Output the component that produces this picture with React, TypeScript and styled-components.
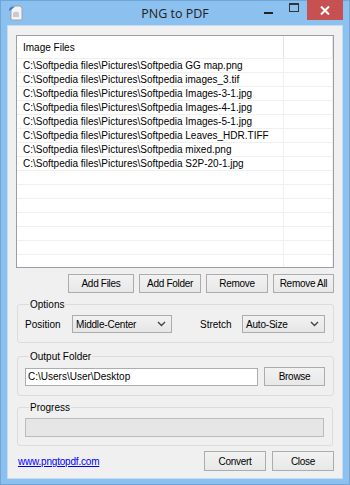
import React from 'react';
import styled, { createGlobalStyle } from 'styled-components';

const GlobalStyle = createGlobalStyle`
    html, body {
        margin: 0;
        padding: 0;
        overflow: hidden;
    }
    body {
        font-family: "Liberation Sans", Arial, sans-serif;
        font-size: 10px;
        color: #000;
    }
`;

const Window = styled.div`
    width: 350px;
    height: 485px;
    box-sizing: border-box;
    background: #8bc0ef;
    border: 1px solid #6fa6da;
    display: flex;
    flex-direction: column;
`;

const TitleBar = styled.div`
    height: 24px;
    display: grid;
    grid-template-columns: 1fr auto 1fr;
    align-items: start;
`;

const AppIcon = styled.div`
    padding: 4px 0 0 7px;
    height: 16px;
`;

const Title = styled.div`
    font-family: "Open Sans", "Noto Sans", sans-serif;
    font-size: 12.5px;
    color: #222;
    line-height: 24px;
    padding-top: 1px;
`;

const Controls = styled.div`
    justify-self: end;
    display: flex;
    align-items: flex-start;
    margin-right: 6px;
`;

const CtrlButton = styled.div<{ $red?: boolean; $w: number }>`
    width: ${(p) => p.$w}px;
    height: 20px;
    display: flex;
    align-items: center;
    justify-content: center;
    background: ${(p) => (p.$red ? '#c75050' : 'transparent')};
    margin-top: -1px;
`;

const Client = styled.div`
    flex: 1;
    margin: 0 6px 5px 6px;
    background: #f0f0f0;
    border: 1px solid #c4ddf4;
    padding: 9px 8px 0 8px;
    display: flex;
    flex-direction: column;
`;

const ListBox = styled.div`
    height: 233px;
    box-sizing: border-box;
    border: 1px solid #9a9ea6;
    background: #fff;
    overflow: hidden;
`;

const Row = styled.div<{ $head?: boolean }>`
    display: grid;
    grid-template-columns: 267px 1fr;
    height: ${(p) => (p.$head ? 23 : 14)}px;
    box-sizing: border-box;
    border-bottom: 1px solid #f0f0f0;
`;

const Cell = styled.div<{ $head?: boolean }>`
    padding-left: 6px;
    line-height: ${(p) => (p.$head ? 23 : 14)}px;
    white-space: nowrap;
    overflow: hidden;
    border-right: 1px solid ${(p) => (p.$head ? '#e5e5e5' : '#f0f0f0')};
`;

const ButtonRow = styled.div<{ $top: number }>`
    display: flex;
    justify-content: flex-end;
    align-items: center;
    gap: 5px;
    margin-top: ${(p) => p.$top}px;
`;

const Button = styled.div<{ $w: number; $h?: number }>`
    width: ${(p) => p.$w}px;
    height: ${(p) => p.$h || 19}px;
    box-sizing: border-box;
    border: 1px solid #acacac;
    background: linear-gradient(#f2f2f2, #e8e8e8);
    display: flex;
    align-items: center;
    justify-content: center;
    letter-spacing: -0.3px;
`;

const Group = styled.fieldset<{ $top: number; $bottom: number }>`
    margin: ${(p) => p.$top}px 1px 0 1px;
    padding: 4px 8px ${(p) => p.$bottom}px 7px;
    border: 1px solid #dcdcdc;
    border-radius: 3px;
    display: flex;
    align-items: center;
`;

const Legend = styled.legend`
    padding: 0 1px;
    margin-left: 4px;
    line-height: 13px;
`;

const Label = styled.div<{ $w: number; $gap?: number }>`
    width: ${(p) => p.$w}px;
    margin-left: ${(p) => p.$gap || 0}px;
`;

const Combo = styled.div<{ $w: number }>`
    width: ${(p) => p.$w}px;
    height: 18px;
    box-sizing: border-box;
    border: 1px solid #acacac;
    background: linear-gradient(#f2f2f2, #e6e6e6);
    display: flex;
    align-items: center;
    justify-content: space-between;
    padding: 0 5px 0 3px;
    letter-spacing: -0.2px;
`;

const TextInput = styled.div`
    width: 233px;
    height: 18px;
    box-sizing: border-box;
    border: 1px solid #abadb3;
    background: #fff;
    padding-left: 2px;
    line-height: 16px;
    margin-right: 6px;
`;

const ProgressBar = styled.div`
    flex: 1;
    height: 19px;
    box-sizing: border-box;
    border: 1px solid #bcbcbc;
    background: #e6e6e6;
`;

const Footer = styled.div`
    display: flex;
    align-items: center;
    margin-top: 5px;
    gap: 6px;
`;

const Link = styled.a`
    color: #0000ff;
    text-decoration: underline;
    margin-right: auto;
    padding-left: 2px;
    letter-spacing: -0.2px;
`;

const Chevron = () => (
    <svg width="9" height="6" viewBox="0 0 9 6">
        <path d="M1 1 L4.5 4.5 L8 1" fill="none" stroke="#444" strokeWidth="1.4" />
    </svg>
);

const files = [
    'C:\\Softpedia files\\Pictures\\Softpedia GG map.png',
    'C:\\Softpedia files\\Pictures\\Softpedia images_3.tif',
    'C:\\Softpedia files\\Pictures\\Softpedia Images-3-1.jpg',
    'C:\\Softpedia files\\Pictures\\Softpedia Images-4-1.jpg',
    'C:\\Softpedia files\\Pictures\\Softpedia Images-5-1.jpg',
    'C:\\Softpedia files\\Pictures\\Softpedia Leaves_HDR.TIFF',
    'C:\\Softpedia files\\Pictures\\Softpedia mixed.png',
    'C:\\Softpedia files\\Pictures\\Softpedia S2P-20-1.jpg',
];

const App = () => {
    const rows = [...files, ...Array(8).fill('')];

    return (
        <Window>
            <GlobalStyle />
            <TitleBar>
                <AppIcon>
                    <svg width="15" height="16" viewBox="0 0 15 16">
                        <path d="M3 1 H12 L14 3 V15 H3 Z" fill="#f4f4f4" stroke="#9aa3ad" />
                        <path d="M5 8 Q8 5 11 8 L11 12 L5 12 Z" fill="#c8ccd2" />
                        <path d="M1 6 Q1 1 7 1.5 L3.5 4.5 Z" fill="#2a7fd4" />
                    </svg>
                </AppIcon>
                <Title>PNG to PDF</Title>
                <Controls>
                    <CtrlButton $w={26}>
                        <svg width="9" height="10" viewBox="0 0 9 10">
                            <rect x="0" y="7" width="9" height="2" fill="#222" />
                        </svg>
                    </CtrlButton>
                    <CtrlButton $w={26}>
                        <svg width="10" height="9" viewBox="0 0 10 9" style={{ marginTop: -5 }}>
                            <rect x="0.5" y="0.5" width="9" height="8" fill="none" stroke="#333" />
                            <rect x="0" y="0" width="10" height="2" fill="#333" />
                        </svg>
                    </CtrlButton>
                    <CtrlButton $w={36} $red>
                        <svg width="10" height="9" viewBox="0 0 10 9">
                            <path d="M1 0.5 L9 8.5 M9 0.5 L1 8.5" stroke="#fff" strokeWidth="2" />
                        </svg>
                    </CtrlButton>
                </Controls>
            </TitleBar>
            <Client>
                <ListBox>
                    <Row $head>
                        <Cell $head>Image Files</Cell>
                        <Cell $head />
                    </Row>
                    {rows.map((f, i) => (
                        <Row key={i}>
                            <Cell>{f}</Cell>
                            <Cell />
                        </Row>
                    ))}
                </ListBox>
                <ButtonRow $top={6}>
                    <Button $w={66}>Add Files</Button>
                    <Button $w={62}>Add Folder</Button>
                    <Button $w={62}>Remove</Button>
                    <Button $w={61}>Remove All</Button>
                </ButtonRow>
                <Group $top={5} $bottom={9}>
                    <Legend>Options</Legend>
                    <Label $w={47}>Position</Label>
                    <Combo $w={100}>
                        <span>Middle-Center</span>
                        <Chevron />
                    </Combo>
                    <Label $w={42} $gap={28}>Stretch</Label>
                    <Combo $w={83}>
                        <span>Auto-Size</span>
                        <Chevron />
                    </Combo>
                </Group>
                <Group $top={7} $bottom={9}>
                    <Legend>Output Folder</Legend>
                    <TextInput>C:\Users\User\Desktop</TextInput>
                    <Button $w={61}>Browse</Button>
                </Group>
                <Group $top={5} $bottom={8}>
                    <Legend>Progress</Legend>
                    <ProgressBar />
                </Group>
                <Footer>
                    <Link href="#">www.pngtopdf.com</Link>
                    <Button $w={62} $h={20}>Convert</Button>
                    <Button $w={62} $h={20}>Close</Button>
                </Footer>
            </Client>
        </Window>
    );
};

export default App;
